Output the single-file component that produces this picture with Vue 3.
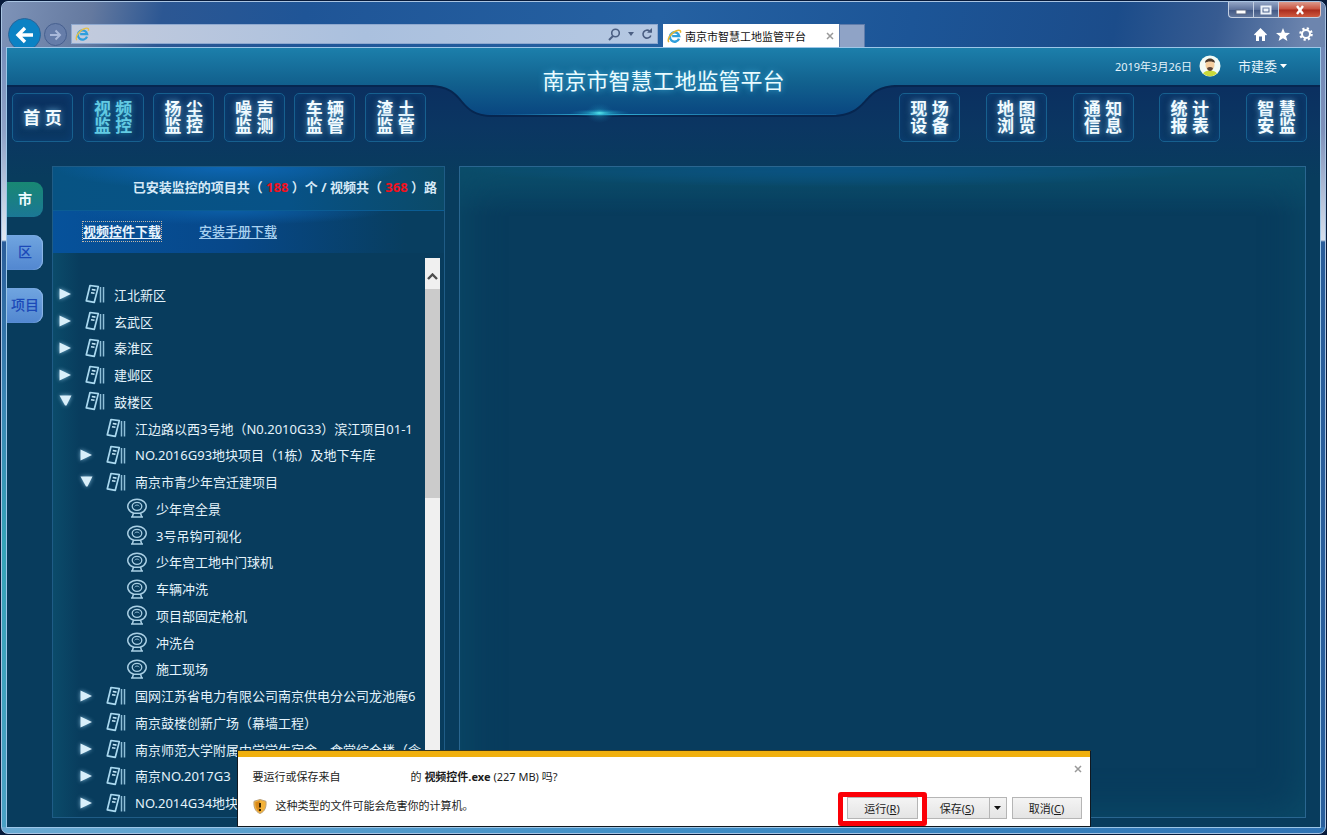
<script setup>
import { ref } from 'vue'

const leftNav = ['首 页', '视 频\n监 控', '扬 尘\n监 控', '噪 声\n监 测', '车 辆\n监 管', '渣 土\n监 管']
const rightNav = ['现 场\n设 备', '地 图\n浏 览', '通 知\n信 息', '统 计\n报 表', '智 慧\n安 监']
const activeNav = ref(1)
const tabs = ['市', '区', '项目']
const activeTab = ref(0)
const address = ref('')

const rows = [
  { level: 0, state: 'closed', text: '江北新区' },
  { level: 0, state: 'closed', text: '玄武区' },
  { level: 0, state: 'closed', text: '秦淮区' },
  { level: 0, state: 'closed', text: '建邺区' },
  { level: 0, state: 'open', text: '鼓楼区' },
  { level: 1, state: 'leaf', text: '江边路以西3号地（N0.2010G33）滨江项目01-1' },
  { level: 1, state: 'closed', text: 'NO.2016G93地块项目（1栋）及地下车库' },
  { level: 1, state: 'open', text: '南京市青少年宫迁建项目' },
  { level: 2, state: 'leaf', text: '少年宫全景' },
  { level: 2, state: 'leaf', text: '3号吊钩可视化' },
  { level: 2, state: 'leaf', text: '少年宫工地中门球机' },
  { level: 2, state: 'leaf', text: '车辆冲洗' },
  { level: 2, state: 'leaf', text: '项目部固定枪机' },
  { level: 2, state: 'leaf', text: '冲洗台' },
  { level: 2, state: 'leaf', text: '施工现场' },
  { level: 1, state: 'closed', text: '国网江苏省电力有限公司南京供电分公司龙池庵6' },
  { level: 1, state: 'closed', text: '南京鼓楼创新广场（幕墙工程）' },
  { level: 1, state: 'closed', text: '南京师范大学附属中学学生宿舍、食堂综合楼（含' },
  { level: 1, state: 'closed', text: '南京NO.2017G3' },
  { level: 1, state: 'closed', text: 'NO.2014G34地块' },
]
</script>

<template>
  <div class="desktop">
    <div class="window">
      <div class="titlebar">
        <div class="controls">
          <button class="ctl" aria-label="最小化"><svg width="12" height="10" viewBox="0 0 12 10"><rect x="1" y="5" width="10" height="4" fill="#fff" stroke="#5b6780" stroke-width="1" /></svg></button>
          <button class="ctl" aria-label="最大化"><svg width="12" height="10" viewBox="0 0 12 10"><path d="M1.500 1.500h9v7h-9z M4.500 4.500h3v1h-3z" fill="none" stroke="#eef3fa" stroke-width="2" /></svg></button>
          <button class="ctl close" aria-label="关闭"><svg width="12" height="10" viewBox="0 0 12 10"><path d="M3 1l6 8M9 1l-6 8" stroke="#fff" stroke-width="2.400" /></svg></button>
        </div>
        <div class="bar">
          <button class="back" aria-label="后退"><svg width="20" height="18" viewBox="0 0 20 18"><path d="M18 9H4M10 2L3 9l7 7" fill="none" stroke="#fff" stroke-width="3.400" /></svg></button>
          <button class="forward" aria-label="前进"><svg width="13" height="12" viewBox="0 0 13 12"><path d="M1 6h10M6.500 1.500L11 6l-4.500 4.500" fill="none" stroke="#a9b9da" stroke-width="2" /></svg></button>
          <div class="address">
            <svg class="ie" viewBox="0 0 16 16"><path d="M12.800 10.200A5 5 0 1 1 13 7.600H5.500" fill="none" stroke="#2f9fdc" stroke-width="2.400" /><path d="M2 14C-.5 11 5 3 11 1.500c3-.8 4 .5 3.200 2.500" fill="none" stroke="#e3c04a" stroke-width="1.500" /></svg>
            <input v-model="address" type="text" aria-label="地址" />
            <button class="mini" aria-label="搜索"><svg width="13" height="13" viewBox="0 0 13 13"><circle cx="7.500" cy="5" r="3.800" fill="none" stroke="#4b5f83" stroke-width="1.600" /><path d="M5 8l-4 4" stroke="#4b5f83" stroke-width="2" /></svg></button>
            <button class="mini" aria-label="显示列表"><svg width="6" height="4" viewBox="0 0 6 4"><path d="M0 0h6L3 4z" fill="#4b5f83" /></svg></button>
            <button class="mini" aria-label="刷新"><svg width="12" height="12" viewBox="0 0 12 12"><path d="M9.800 7.500A4 4 0 1 1 8.500 3" fill="none" stroke="#4b5f83" stroke-width="1.600" /><path d="M6 4.800h5V0z" fill="#4b5f83" /></svg></button>
          </div>
          <div class="tab">
            <svg class="ie" viewBox="0 0 16 16"><path d="M12.800 10.200A5 5 0 1 1 13 7.600H5.500" fill="none" stroke="#2f9fdc" stroke-width="2.600" /><path d="M2 14C-.5 11 5 3 11 1.500c3-.8 4 .5 3.200 2.500" fill="none" stroke="#e6b630" stroke-width="1.600" /></svg>
            <span class="tab-name">南京市智慧工地监管平台</span>
            <button class="mini" aria-label="关闭标签页"><svg width="8" height="8" viewBox="0 0 8 8"><path d="M1 1l6 6M7 1L1 7" stroke="#999" stroke-width="1.500" /></svg></button>
          </div>
          <button class="newtab" aria-label="新建标签页"></button>
          <div class="tools">
            <button class="mini" aria-label="主页"><svg width="13" height="13" viewBox="0 0 13 13"><path d="M6.500 0L13 6.500l-1 1-1-.8V13H8V8.500H5V13H2V6.700l-1 .8-1-1z" fill="#fff" /></svg></button>
            <button class="mini" aria-label="收藏夹"><svg width="14" height="13" viewBox="0 0 14 13"><path d="M7 0l1.900 4.700 5.100.3-3.900 3.200L11.400 13 7 10.300 2.600 13l1.300-4.800L0 5l5.100-.3z" fill="#fff" /></svg></button>
            <button class="mini" aria-label="工具"><svg width="14" height="14" viewBox="0 0 14 14"><circle cx="7" cy="7" r="5.600" fill="none" stroke="#fff" stroke-width="2.400" stroke-dasharray="2.200 2.200" /><circle cx="7" cy="7" r="4" fill="none" stroke="#fff" stroke-width="2" /></svg></button>
          </div>
        </div>
      </div>

      <div class="page">
        <header class="header">
          <svg class="header-shape" viewBox="0 0 1314 80" preserveAspectRatio="none" aria-hidden="true">
            <defs>
              <linearGradient id="band" x1="0" y1="0" x2="0" y2="1">
                <stop offset="0" stop-color="#1c7fab" />
                <stop offset="0.500" stop-color="#12628f" />
                <stop offset="1" stop-color="#094680" />
              </linearGradient>
              <linearGradient id="edge" x1="0" y1="0" x2="1" y2="0">
                <stop offset="0" stop-color="#1f78ae" stop-opacity="0" />
                <stop offset="0.300" stop-color="#35b9dc" />
                <stop offset="1" stop-color="#1f78ae" stop-opacity="0.300" />
              </linearGradient>
              <radialGradient id="spark"><stop offset="0" stop-color="#5ff4f5" /><stop offset="0.400" stop-color="#25a9c8" stop-opacity="0.600" /><stop offset="1" stop-color="#1678ad" stop-opacity="0" /></radialGradient>
            </defs>
            <path d="M0 37H422C462 37 449 67 486 67H824C866 67 852 37 892 37H1314" fill="none" stroke="#062650" stroke-width="4" />
            <path d="M0 0H1314V37H892C852 37 866 67 824 67H486C449 67 462 37 422 37H0Z" fill="url(#band)" />
            <rect x="480" y="66" width="350" height="1" fill="url(#edge)" />
            <ellipse cx="593" cy="65" rx="30" ry="4" fill="url(#spark)" />
            <ellipse cx="593" cy="65" rx="14" ry="10" fill="url(#spark)" opacity="0.400" />
          </svg>
          <h1>南京市智慧工地监管平台</h1>
          <div class="user">
            <span class="date">2019年3月26日</span>
            <svg class="avatar" viewBox="0 0 22 22"><circle cx="11" cy="11" r="10.500" fill="#f3fbf5" /><path d="M4 18.500c2-4 12-4 14 0A10.500 10.500 0 0 1 4 18.500z" fill="#c9d93c" /><ellipse cx="11" cy="10" rx="4.500" ry="5.500" fill="#f6cfa0" /><path d="M6 8c0-6 10-6 10 0-2-2-8-2-10 0z" fill="#4b3a2c" /><path d="M8 13c2-1.500 4-1.500 6 0-.5 4-5.500 4-6 0z" fill="#5b4538" /></svg>
            <button class="account">市建委<svg width="7" height="4" viewBox="0 0 7 4"><path d="M0 0h7L3.500 4z" fill="#fff" /></svg></button>
          </div>
        </header>
        <nav class="nav">
          <div class="nav-left">
            <button v-for="(item, i) in leftNav" :key="item" class="nav-btn" :class="{ active: i === activeNav }" @click="activeNav = i">{{ item }}</button>
          </div>
          <div class="nav-right">
            <button v-for="item in rightNav" :key="item" class="nav-btn">{{ item }}</button>
          </div>
        </nav>

        <main class="main">
          <div class="side">
            <button v-for="(t, i) in tabs" :key="t" class="side-tab" :class="{ active: i === activeTab }" @click="activeTab = i">{{ t }}</button>
          </div>
          <section class="panel list">
            <div class="summary">已安装监控的项目共（ <em>188</em> ）个 / 视频共（ <em>368</em> ）路</div>
            <div class="links">
              <a class="focused" href="#control">视频控件下载</a>
              <a href="#manual">安装手册下载</a>
            </div>
            <div class="tree-wrap">
              <ul class="tree">
                <li v-for="(r, i) in rows" :key="i" :class="'level' + r.level">
                  <svg class="arrow" viewBox="0 0 14 14">
                    <path v-if="r.state === 'closed'" d="M1.500 1.500L13 7 1.500 12.500z" />
                    <path v-else-if="r.state === 'open'" d="M1.500 1.500h12L8.500 11.500H7z" />
                  </svg>
                  <svg v-if="r.level < 2" class="node" viewBox="0 0 20 20"><path d="M5 1.500L13.300 2.600 9.300 18.300 1.300 16.800z" fill="none" stroke="#a9d8ef" stroke-width="1.700" stroke-linejoin="round" /><path d="M6.800 5.500l3.700.6M6 8.700l3.500.6" stroke="#c3e6f7" stroke-width="1.600" /><path d="M15.500 3v15.500" stroke="#8fbfd8" stroke-width="1.500" /><path d="M18.500 3v15.500" stroke="#8fbfd8" stroke-width="1.500" /></svg>
                  <svg v-else class="node" viewBox="0 0 20 20"><path d="M6.500 15A9.200 7.200 0 1 1 13.500 15" fill="none" stroke="#a9cfe4" stroke-width="1.500" /><ellipse cx="10" cy="8.300" rx="4.800" ry="4" fill="none" stroke="#a9cfe4" stroke-width="1.300" /><path d="M7.700 8.300a2.400 1.800 0 0 1 4.600 0" fill="none" stroke="#8db8d0" stroke-width="1" /><path d="M6 15.200h8M4 19h12M6.500 15l-1.200 4M13.500 15l1.200 4" stroke="#a9cfe4" stroke-width="1.500" /></svg>
                  <span>{{ r.text }}</span>
                </li>
              </ul>
              <div class="scroll">
                <div class="scroll-up"><svg width="11" height="7" viewBox="0 0 11 7"><path d="M1 6l4.500-4.500L10 6" fill="none" stroke="#4d4d4d" stroke-width="2.400" /></svg></div>
                <div class="thumb"></div>
              </div>
            </div>
          </section>
          <section class="panel video"></section>
        </main>

        <div class="download" role="dialog" aria-label="下载">
          <div class="message">
            <p class="first"><span class="from">要运行或保存来自</span><span>的 <b>视频控件.exe</b> (227 MB) 吗?</span></p>
            <p class="warn"><svg width="14" height="15" viewBox="0 0 14 15"><path d="M7 .5l6 1.800C13.500 8 12 12.500 7 14.500 2 12.500.5 8 1 2.300z" fill="#f3b23a" stroke="#b9a07a" stroke-width="1" /><path d="M7 2v11C3.500 11.300 2.300 8 2.400 3.300z" fill="#d98a1c" /><path d="M7 4v4.500" stroke="#3a2500" stroke-width="2" /><rect x="6" y="10" width="2" height="2" fill="#3a2500" /></svg><span>这种类型的文件可能会危害你的计算机。</span></p>
          </div>
          <div class="actions">
            <button class="mini dismiss" aria-label="关闭"><svg width="8" height="8" viewBox="0 0 8 8"><path d="M1 1l6 6M7 1L1 7" stroke="#999" stroke-width="1.500" /></svg></button>
            <div class="buttons">
              <button class="act run">运行(<u>R</u>)</button>
              <button class="act save">保存(<u>S</u>)</button>
              <button class="act split" aria-label="保存选项"><svg width="7" height="4" viewBox="0 0 7 4"><path d="M0 0h7L3.500 4z" fill="#111" /></svg></button>
              <button class="act cancel">取消(<u>C</u>)</button>
            </div>
          </div>
        </div>
      </div>
    </div>
  </div>
</template>

<style>
html, body { margin: 0; background: #071a3a; }
</style>

<style scoped>
* { box-sizing: border-box; }
button { font: inherit; color: inherit; border: 0; background: none; padding: 0; cursor: pointer; }
svg { display: block; flex: none; }
.desktop {
  min-height: 100vh; display: flex; padding: 1px;
  background: #071a3a;
  font-family: "Noto Sans", "Noto Sans CJK SC", sans-serif; font-size: 13px; color: #e4f3fb;
}
.window {
  flex: 1; min-width: 0; display: flex; flex-direction: column;
  border: 1px solid #a9c4e2; border-radius: 7px; padding: 0 4px 5px; overflow: hidden;
  background:
    linear-gradient(90deg, #6aaad2, #3f8ec6 50%, #2f73b4) bottom / 100% 6px no-repeat,
    linear-gradient(#6a83b4, #8fa3c8 130px, #dfe8f2 238px, #2a5d9a 240px, #3a86b4 400px, #35a3b8 540px, #4aa0c4) left / 50% 100% no-repeat,
    linear-gradient(#6a83b4, #7f92bb 130px, #d6dfec 238px, #2a5d9a 240px, #2a5f9c) right / 50% 100% no-repeat;
}
.titlebar {
  margin: 0 -4px; padding: 0 4px 0 2px; overflow: hidden;
  background: linear-gradient(100deg, #7e93b8 0, #64799f 90px, #2c5793 160px, #1f5597 300px, #2561a2 650px, #1c5597 900px, #1b4c8a 1100px, #375b91 1200px, #6d85ae 1290px);
}
.controls { display: flex; justify-content: flex-end; height: 16px; }
.ctl {
  width: 25px; height: 16px; display: flex; align-items: center; justify-content: center;
  border: 1px solid #c3cfe2; border-top: 0; border-right: 0;
  background: linear-gradient(#93a5c5, #5e739c 50%, #3f5683 51%, #63799f);
}
.ctl:first-child { border-bottom-left-radius: 4px; }
.ctl.close { width: 43px; border-right: 1px solid #e5c3c0; border-bottom-right-radius: 4px; background: linear-gradient(#dc9a8c, #c9523f 48%, #a92b1c 52%, #cf5a3f); }
.bar { display: flex; align-items: flex-start; height: 29px; }
.back {
  width: 33px; height: 33px; flex: none; margin-left: 4px; border-radius: 50%;
  background: #0b82c4; border: 1px solid #2a6498;
  display: flex; align-items: center; justify-content: center;
}
.forward {
  width: 23px; height: 23px; flex: none; margin: 5px 4px 0 3px; border-radius: 50%;
  border: 1px solid #47608f; background: #667da9;
  display: flex; align-items: center; justify-content: center;
}
.address {
  flex: 0 1 587px; height: 20px; margin-top: 6px; padding: 0 4px 0 3px;
  display: flex; align-items: center; gap: 7px;
  background: linear-gradient(90deg, #c3cbdd, #aac0de 50%, #b5c8e2); border: 1px solid #8fa9cf;
}
.ie { width: 15px; height: 15px; }
.address input { flex: 1; min-width: 0; height: 18px; border: 0; padding: 0; background: none; outline: 0; font: inherit; color: #1a2b45; }
.mini { display: flex; align-items: center; justify-content: center; flex: none; }
.tab {
  width: 176px; height: 24px; margin: 6px 0 0 5px; padding: 0 5px 0 4px;
  display: flex; align-items: center; gap: 3px; background: #fff; color: #111; font-size: 11px;
}
.tab-name { flex: 1; white-space: nowrap; }
.newtab { width: 26px; height: 24px; margin-top: 6px; background: #8fa3c6; border: 1px solid #5f7cab; }
.tools { margin: 9px 8px 0 auto; display: flex; align-items: center; gap: 9px; height: 14px; }

.page {
  position: relative; flex: 1; display: flex; flex-direction: column; min-width: 0;
  border: 1px solid #9cc6e8;
  background: linear-gradient(#0b2f60 36px, #0b3662 80px, #083c5d 130px);
}
.header { position: relative; height: 38px; }
.header-shape { position: absolute; inset: 0 0 auto; width: 100%; height: 80px; }
h1 {
  position: absolute; left: 0; right: 0; top: 16px; margin: 0; text-align: center;
  font-size: 22px; line-height: 32px; font-weight: 400; color: #e9fbff; text-shadow: 0 0 6px #3fb0dc;
}
.user { position: absolute; right: 33px; top: 6px; display: flex; align-items: center; height: 24px; }
.date { font-size: 11px; }
.avatar { width: 22px; height: 22px; margin: 0 17px 0 7px; }
.account { display: flex; align-items: center; gap: 3px; line-height: 22px; }
.nav { position: relative; display: flex; justify-content: space-between; padding: 7px 13px 0 5px; }
.nav-left { width: 414px; display: flex; justify-content: space-between; }
.nav-right { width: 408px; display: flex; justify-content: space-between; }
.nav-btn {
  width: 61px; height: 49px; padding-bottom: 1px; border: 1px solid #17608f; border-radius: 5px;
  white-space: pre-line; text-align: center;
  font-size: 17px; line-height: 17px; font-weight: 700; color: #f2fbff; text-shadow: 0 0 6px #6db4dd;
  box-shadow: inset 0 0 10px #0c3f74;
}
.nav-btn.active { color: #63cbe3; text-shadow: 0 0 6px #2796bd; }

.main { flex: 1; display: flex; padding: 24px 14px 9px 0; }
.side { width: 36px; margin: 16px 9px 0 0; display: flex; flex-direction: column; gap: 18px; }
.side-tab {
  height: 35px; padding-bottom: 3px; border-radius: 0 9px 9px 0; font-size: 14px; font-weight: 500;
  background: linear-gradient(#70a5e0, #5287d0); color: #1b49b8; box-shadow: inset -1px 0 1px #8fb8e8;
}
.side-tab.active { background: linear-gradient(#188873, #1b7795); color: #eefcff; box-shadow: none; font-weight: 700; }
.panel { border: 1px solid #2a6690; display: flex; flex-direction: column; }
.list {
  width: 393px; flex: none; margin-right: 14px; border-color: #1f5c86;
  background: linear-gradient(90deg, #0b4b6a, transparent 28px);
}
.summary {
  height: 43px; padding: 0 7px 3px 0; display: block; text-align: right; line-height: 40px;
  font-weight: 700; white-space: nowrap;
  background: radial-gradient(ellipse 45% 24px at 45% 0, #0d66b4, transparent), linear-gradient(90deg, #075383, #075287 60%, #0b4a68);
  color: #d5e9f7;
}
.summary em { font-style: normal; color: #f2111d; }
.links {
  height: 43px; padding: 0 0 2px 30px; display: flex; align-items: center; gap: 38px; border-top: 1px solid #0b5d94;
  background: radial-gradient(ellipse 40% 14px at 45% 0, #0b5da5, transparent), linear-gradient(90deg, #06529b, #07488a 45%, #083e60 90%);
}
.links a { color: #a9d2f0; line-height: 19px; text-underline-offset: 2px; font-weight: 500; }
.links a.focused { color: #e8f4fd; font-weight: 700; outline: 1px dotted #c3b8a8; }
.tree-wrap { flex: 1; display: flex; padding: 5px 4px 0 0; }
.tree { flex: 1; min-width: 0; margin: 0; padding: 23px 0 1px; list-style: none; display: flex; flex-direction: column; overflow: hidden; }
.tree li { flex: 1 0 22px; display: flex; align-items: center; white-space: nowrap; padding-left: 5px; }
.tree li.level1 { padding-left: 26px; }
.tree li.level2 { padding-left: 47px; }
.arrow { width: 14px; height: 14px; margin-right: 13px; fill: #d9effa; filter: drop-shadow(0 0 2px #7db4d4); overflow: visible; }
.node { width: 20px; height: 20px; margin-right: 9px; }
.scroll { width: 15px; flex: none; background: #f0f0f0; }
.scroll-up { height: 31px; display: flex; align-items: center; justify-content: center; padding-top: 6px; }
.thumb { height: 209px; background: #cbcbcb; }
.video {
  flex: 1; min-width: 0;
  background:
    radial-gradient(ellipse 45% 20px at 45% 0, #0b5a9c, transparent),
    linear-gradient(#0b4f6c, transparent 48px);
  box-shadow: inset 0 0 40px #0b4c69;
}

.download {
  position: absolute; left: 0; right: 0; bottom: 0; margin: 0 auto; width: 854px;
  display: flex; justify-content: space-between; padding: 11px 8px 7px 15px;
  background: #fff; border: 1px solid #101820; border-top: 0; box-shadow: inset 0 6px #f0b00f, 0 -1px #3c3a20;
  color: #1c1c1c; font-size: 11px;
}
.message { display: flex; flex-direction: column; gap: 9px; padding: 5px 0 3px; }
.message p { margin: 0; line-height: 20px; display: flex; align-items: center; }
.from { width: 158px; }
.warn svg { margin-right: 9px; }
.actions { display: flex; flex-direction: column; justify-content: space-between; align-items: flex-end; padding-top: 3px; }
.buttons { display: flex; }
.act { height: 22px; border: 1px solid #b5b5b5; background: linear-gradient(#f4f4f4, #e4e4e4); }
.run { position: relative; width: 71px; margin-right: 7px; }
.run::after { content: ""; position: absolute; inset: -6px -10px -8px; border: 5px solid #fb0007; border-radius: 3px; }
.save { width: 65px; }
.split { width: 17px; border-left: 0; display: flex; align-items: center; justify-content: center; margin-right: 5px; }
.cancel { width: 70px; }
</style>
